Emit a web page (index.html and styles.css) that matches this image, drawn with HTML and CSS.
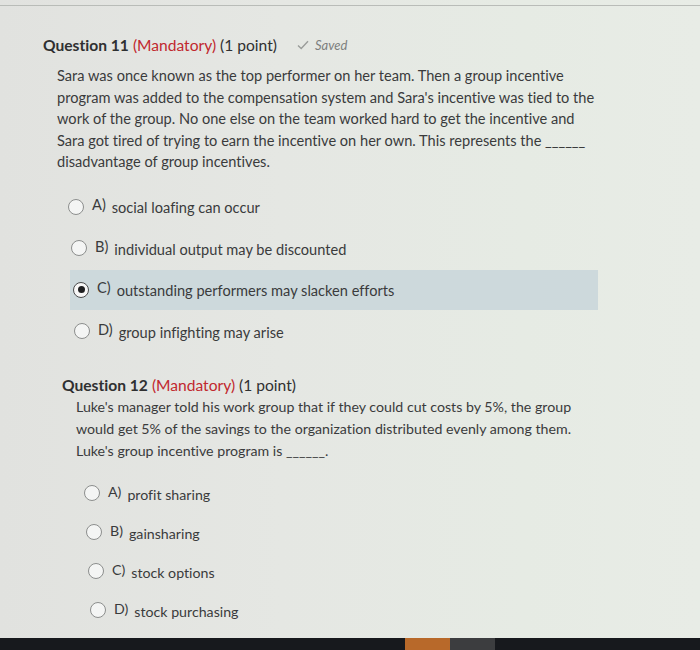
FILE: index.html
```html
<!DOCTYPE html>
<html>
<head>
<meta charset="utf-8">
<link rel="stylesheet" href="styles.css">
</head>
<body>
<div class="screen">
  <div class="topline"></div>
  <section class="question q11">
    <h2 class="qtitle"><span class="qnum">Question 11</span> <span class="mand">(Mandatory)</span> <span class="pts">(1 point)</span>
      <span class="saved"><svg class="check" viewBox="0 0 12 10" width="12" height="10"><path d="M1 5.5 L4.2 8.5 L11 1.2" fill="none" stroke="#9a9c9a" stroke-width="1.4"/></svg><em>Saved</em></span>
    </h2>
    <p class="qtext">Sara was once known as the top performer on her team. Then a group incentive program was added to the compensation system and Sara's incentive was tied to the work of the group. No one else on the team worked hard to get the incentive and Sara got tired of trying to earn the incentive on her own. This represents the ______ disadvantage of group incentives.</p>
    <ul class="options">
      <li class="opt o1"><span class="radio"></span><span class="lbl">A)</span><span class="otext">social loafing can occur</span></li>
      <li class="opt o2"><span class="radio"></span><span class="lbl">B)</span><span class="otext">individual output may be discounted</span></li>
      <li class="opt o3 selected"><span class="radio checked"></span><span class="lbl">C)</span><span class="otext">outstanding performers may slacken efforts</span></li>
      <li class="opt o4"><span class="radio"></span><span class="lbl">D)</span><span class="otext">group infighting may arise</span></li>
    </ul>
  </section>
  <section class="question q12">
    <h2 class="qtitle"><span class="qnum">Question 12</span> <span class="mand">(Mandatory)</span> <span class="pts">(1 point)</span></h2>
    <p class="qtext">Luke's manager told his work group that if they could cut costs by 5%, the group would get 5% of the savings to the organization distributed evenly among them. Luke's group incentive program is ______.</p>
    <ul class="options">
      <li class="opt o1"><span class="radio"></span><span class="lbl">A)</span><span class="otext">profit sharing</span></li>
      <li class="opt o2"><span class="radio"></span><span class="lbl">B)</span><span class="otext">gainsharing</span></li>
      <li class="opt o3"><span class="radio"></span><span class="lbl">C)</span><span class="otext">stock options</span></li>
      <li class="opt o4"><span class="radio"></span><span class="lbl">D)</span><span class="otext">stock purchasing</span></li>
    </ul>
  </section>
  <div class="taskbar">
    <span class="tb-gap"></span>
    <span class="tb-app orange"></span>
    <span class="tb-app gray"></span>
  </div>
</div>
</body>
</html>
```

FILE: styles.css
```css
html, body {
  margin: 0;
  padding: 0;
}
body {
  width: 700px;
  height: 650px;
  overflow: hidden;
  font-family: Lato, "Open Sans", sans-serif;
  font-variant-ligatures: none;
  color: #3b3c3d;
}
.screen {
  position: relative;
  width: 700px;
  height: 650px;
  background: linear-gradient(90deg, #e1e2df 0%, #e5e7e3 40%, #e6ebe4 75%, #e8ece6 100%);
  display: flex;
  flex-direction: column;
}
.topline {
  height: 1px;
  margin-top: 5px;
  background: #b9bcb8;
}
.question {
  display: flex;
  flex-direction: column;
}
.q11 {
  margin-top: 29px;
  padding-left: 43px;
}
.q12 {
  margin-top: 23px;
  padding-left: 62px;
}
.qtitle {
  margin: 0;
  font-size: 15.6px;
  line-height: 20px;
  font-weight: 400;
  color: #2f3031;
  display: flex;
  align-items: center;
  gap: 4px;
}
.qnum {
  font-weight: 700;
}
.mand {
  color: #c1282e;
}
.saved {
  display: inline-flex;
  align-items: center;
  gap: 6px;
  margin-left: 16px;
  color: #7d7f7e;
  font-size: 13px;
}
.saved em {
  font-style: italic;
}
.qtext {
  margin: 10px 0 0 14px;
  width: 544px;
  font-size: 14.6px;
  line-height: 21.6px;
  color: #3a3b3c;
}
.q12 .qtext {
  margin-top: 1px;
  width: 500px;
  line-height: 22px;
  font-size: 14.2px;
}
.options {
  list-style: none;
  margin: 13px 0 0 0;
  padding: 0;
}
.q12 .options {
  margin-top: 12px;
}
.opt {
  display: flex;
  align-items: center;
  height: 41.5px;
  font-size: 14.6px;
  color: #3a3b3c;
}
.q12 .opt {
  height: 39px;
  font-size: 14.2px;
}
.q11 .o1 { padding-left: 25px; }
.q11 .o2 { padding-left: 28px; }
.q11 .o3 { padding-left: 30px; }
.q11 .o4 { padding-left: 31px; }
.q12 .o1 { padding-left: 22px; }
.q12 .o2 { padding-left: 24px; }
.q12 .o3 { padding-left: 26px; }
.q12 .o4 { padding-left: 28px; }
.opt.selected {
  margin-left: 27px;
  padding-left: 3px;
  width: 525px;
  height: 40px;
  margin-top: 0.75px;
  margin-bottom: 0.75px;
  background: #cdd9dc;
}
.radio {
  box-sizing: border-box;
  width: 16px;
  height: 16px;
  border: 1.5px solid #8c8e8d;
  border-radius: 50%;
  background: #f4f5f4;
  flex: none;
  display: flex;
  align-items: center;
  justify-content: center;
}
.radio.checked {
  border-color: #4a4b4c;
  background: #f7f7f7;
}
.radio.checked::after {
  content: "";
  width: 7px;
  height: 7px;
  border-radius: 50%;
  background: #1f2021;
}
.lbl {
  margin-left: 8px;
  position: relative;
  top: -2px;
}
.otext {
  margin-left: 6px;
  position: relative;
  top: 1px;
}
.taskbar {
  position: absolute;
  left: 0;
  right: 0;
  top: 638px;
  height: 12px;
  background: #17191d;
  display: flex;
}
.tb-gap {
  width: 405px;
}
.tb-app {
  width: 45px;
  height: 12px;
}
.tb-app.orange {
  background: #b8692a;
}
.tb-app.gray {
  background: #3c3d3f;
}
```
